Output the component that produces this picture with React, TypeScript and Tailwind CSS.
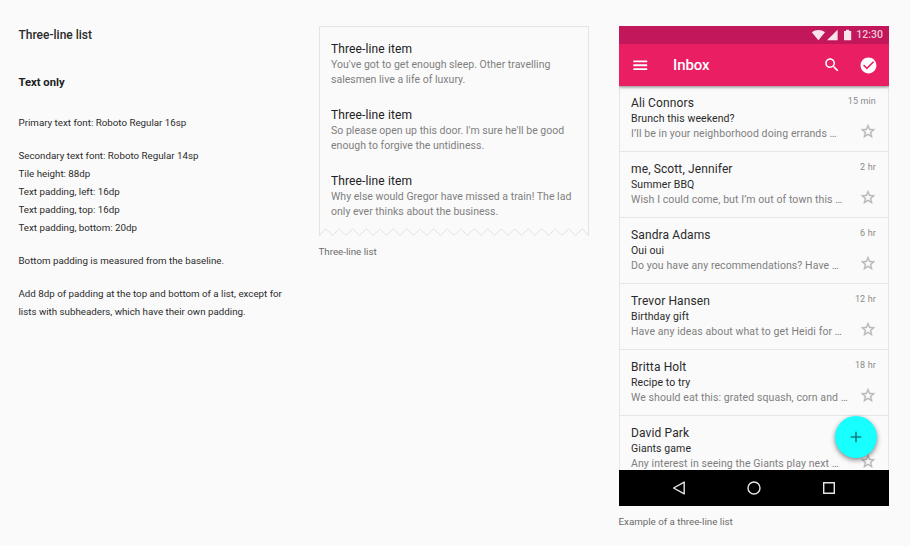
import React from 'react';

const items = [
  ["You've got to get enough sleep. Other travelling", 'salesmen live a life of luxury.'],
  ["So please open up this door. I'm sure he'll be good", 'enough to forgive the untidiness.'],
  ['Why else would Gregor have missed a train! The lad', 'only ever thinks about the business.'],
];

const mails = [
  { from: 'Ali Connors', subject: 'Brunch this weekend?', body: 'I’ll be in your neighborhood doing errands …', time: '15 min' },
  { from: 'me, Scott, Jennifer', subject: 'Summer BBQ', body: 'Wish I could come, but I’m out of town this …', time: '2 hr' },
  { from: 'Sandra Adams', subject: 'Oui oui', body: 'Do you have any recommendations? Have …', time: '6 hr' },
  { from: 'Trevor Hansen', subject: 'Birthday gift', body: 'Have any ideas about what to get Heidi for …', time: '12 hr' },
  { from: 'Britta Holt', subject: 'Recipe to try', body: 'We should eat this: grated squash, corn and …', time: '18 hr' },
  { from: 'David Park', subject: 'Giants game', body: 'Any interest in seeing the Giants play next …', time: '' },
];

const zigzag = Array.from({ length: 41 }, (_, i) => {
  const x = Math.min(269.5, Math.max(0.5, i * 6.75));
  return `${x},${i % 2 === 0 ? 7.5 : 0.8}`;
}).join(' ');

function Icon({ d, className }: { d: string; className: string }) {
  return (
    <svg viewBox="0 0 24 24" fill="currentColor" className={className}>
      <path d={d} />
    </svg>
  );
}

const STAR =
  'M22 9.24l-7.19-.62L12 2 9.19 8.63 2 9.24l5.46 4.73L5.82 21 12 17.27 18.18 21l-1.63-7.03L22 9.24zM12 15.4l-3.76 2.27 1-4.28-3.32-2.88 4.38-.38L12 6.1l1.71 4.04 4.38.38-3.32 2.88 1 4.28L12 15.4z';

function Specs() {
  return (
    <section className="w-[300px] shrink-0 pl-[18.5px] text-[#2a2a2a]">
      <h2 className="mt-[25px] text-[12px] leading-[20px] font-medium">Three-line list</h2>
      <h3 className="mt-[29px] text-[11.25px] leading-[18px] font-bold text-[#212121]">Text only</h3>
      <div className="mt-[22px] flex flex-col gap-[15px] text-[9.75px] leading-[18px] whitespace-nowrap">
        <p>Primary text font: Roboto Regular 16sp</p>
        <p>
          Secondary text font: Roboto Regular 14sp
          <br />
          Tile height: 88dp
          <br />
          Text padding, left: 16dp
          <br />
          Text padding, top: 16dp
          <br />
          Text padding, bottom: 20dp
        </p>
        <p>Bottom padding is measured from the baseline.</p>
        <p>
          Add 8dp of padding at the top and bottom of a list, except for
          <br />
          lists with subheaders, which have their own padding.
        </p>
      </div>
    </section>
  );
}

function ListCard() {
  return (
    <figure className="mt-[26px] w-[270px] shrink-0">
      <div className="h-[202px] border-x border-t border-[#e4e4e4] pt-[6px] pl-[11px]">
        {items.map(([a, b]) => (
          <div key={a} className="pt-[8px] pb-[12px] whitespace-nowrap">
            <div className="text-[12px] leading-[16px] tracking-[0.12px] text-[#212121]">Three-line item</div>
            <div className="text-[10.5px] leading-[15px] tracking-[0.02px] text-[#7f7f7f]">
              {a}
              <br />
              {b}
            </div>
          </div>
        ))}
      </div>
      <svg viewBox="0 0 270 8" className="block h-[8px] w-[270px]" fill="none" stroke="#e2e2e2">
        <polyline points={`0.5,0 0.5,7.5 ${zigzag} 269.5,0`} />
      </svg>
      <figcaption className="mt-[9px] -ml-[0.5px] text-[9.75px] leading-[14px] text-[#6a6a6a]">Three-line list</figcaption>
    </figure>
  );
}

function StatusBar() {
  return (
    <div className="flex h-[18px] items-center bg-[#c2185b] pr-[6px] pl-[192px] text-[#f9e3ec]">
      <svg viewBox="0 0 42 12" className="h-[12px] w-[42px] shrink-0" fill="currentColor">
        <path d="M7.4 11.3 L0.8 3.2 C4.8 0.2 10 0.2 14 3.2 Z" />
        <path d="M16 11.2 H26.6 V0.8 Z" />
        <path d="M33 1.9 H35 V0.8 H38.2 V1.9 H40.2 V11.3 H33 Z" />
      </svg>
      <span className="ml-auto text-[10.5px] leading-[18px] font-medium text-[#f3c6d8]">12:30</span>
    </div>
  );
}

function Toolbar() {
  return (
    <div className="relative flex h-[42px] items-center bg-[#e91e63] pr-[11px] pl-[12px] text-white shadow-[0_1px_3px_rgba(0,0,0,0.5)] [clip-path:inset(0_0_-6px_0)]">
      <Icon className="h-[18.5px] w-[18.5px]" d="M3 18.3h18v-2.4H3v2.4zm0-5.1h18v-2.4H3v2.4zm0-7.5v2.4h18V5.7H3z" />
      <span className="ml-[23.5px] text-[15px] leading-[20px] font-medium tracking-[-0.1px]">Inbox</span>
      <Icon
        className="ml-auto h-[18px] w-[18px]"
        d="M15.5 14h-.79l-.28-.27C15.41 12.59 16 11.11 16 9.5 16 5.91 13.09 3 9.5 3S3 5.91 3 9.5 5.91 16 9.5 16c1.61 0 3.09-.59 4.23-1.57l.27.28v.79l5 4.99L20.49 19l-4.99-5zm-6 0C7.01 14 5 11.99 5 9.5S7.01 5 9.5 5 14 7.01 14 9.5 11.99 14 9.5 14z"
      />
      <Icon
        className="ml-[18px] h-[19px] w-[19px]"
        d="M12 2C6.48 2 2 6.48 2 12s4.48 10 10 10 10-4.48 10-10S17.52 2 12 2zm-2 15l-5-5 1.41-1.41L10 14.17l7.59-7.59L19 8l-9 9z"
      />
    </div>
  );
}

function NavBar() {
  return (
    <div className="relative flex h-[36px] items-center justify-center gap-[59px] bg-black text-[#e6e6e6]">
      <svg viewBox="0 0 16 16" className="h-[16px] w-[16px]" fill="none" stroke="currentColor" strokeWidth="1.4" strokeLinejoin="round">
        <path d="M2.6 8 L13.2 2.1 V13.9 Z" />
      </svg>
      <svg viewBox="0 0 16 16" className="h-[16px] w-[16px]" fill="none" stroke="currentColor" strokeWidth="1.4">
        <circle cx="8" cy="8" r="6" />
      </svg>
      <svg viewBox="0 0 16 16" className="h-[16px] w-[16px]" fill="none" stroke="currentColor" strokeWidth="1.4">
        <path d="M2.7 2.7 H13.3 V13.3 H2.7 Z" />
      </svg>
    </div>
  );
}

function Phone() {
  return (
    <figure className="mt-[26px] ml-[30px] w-[270px] shrink-0">
      <div className="relative flex h-[480px] flex-col">
        <StatusBar />
        <Toolbar />
        <div className="h-[384px] overflow-hidden border-x border-[#e6e6e6]">
          {mails.map((m) => (
            <div key={m.from} className="flex h-[66px] justify-between border-b border-[#e6e6e6] pr-[11px] pl-[11px] whitespace-nowrap">
              <div className="pt-[9px] text-[10.5px] leading-[15px] tracking-[0.09px] text-[#2a2a2a]">
                <div className="text-[12px] leading-[16px] tracking-[0.12px]">{m.from}</div>
                <div>{m.subject}</div>
                <div className="text-[#7f7f7f]">{m.body}</div>
              </div>
              <div className="flex flex-col items-end pt-[8px] text-[9px] leading-[14px] tracking-[0.15px] text-[#8a8a8a]">
                <span className="h-[14px] pr-[1px]">{m.time}</span>
                <svg viewBox="0.7 0.3 24 24" className="mt-[15px] h-[17px] w-[17px] text-[#b8b8b8]" fill="currentColor" stroke="currentColor" strokeWidth="0.5">
                  <path d={STAR} />
                </svg>
              </div>
            </div>
          ))}
        </div>
        <div className="absolute top-[390px] left-[216px] flex h-[42px] w-[42px] items-center justify-center rounded-full bg-[#18ffff] shadow-[0_2px_5px_rgba(0,0,0,0.48)]">
          <svg viewBox="0 0 12 12" className="h-[12px] w-[12px]" fill="none" stroke="#0d7f7f" strokeWidth="1.6">
            <path d="M6 0.8 V11.2 M0.8 6 H11.2" />
          </svg>
        </div>
        <NavBar />
      </div>
      <figcaption className="mt-[9px] -ml-[0.5px] text-[9.75px] leading-[14px] text-[#6a6a6a]">Example of a three-line list</figcaption>
    </figure>
  );
}

export default function App() {
  return (
    <main className="flex h-[546px] w-[910px] overflow-hidden bg-[#fafafa] font-['Roboto',sans-serif]">
      <Specs />
      <div className="flex pl-[19px]">
        <ListCard />
        <Phone />
      </div>
    </main>
  );
}
